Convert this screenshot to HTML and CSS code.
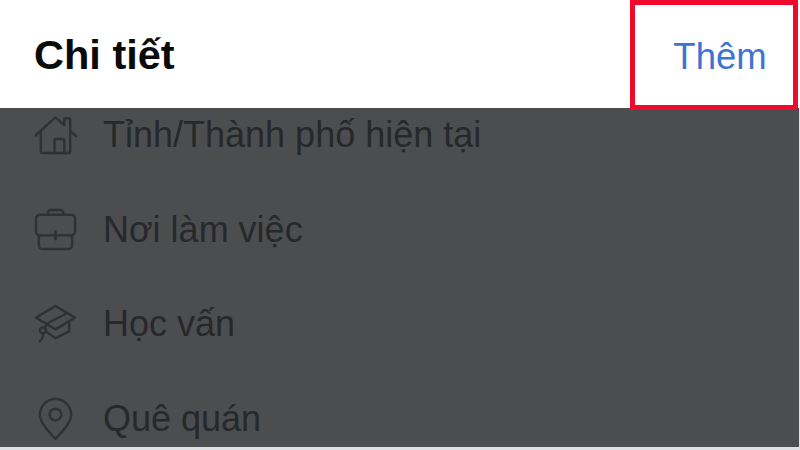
FILE: index.html
```html
<!DOCTYPE html>
<html lang="vi">
<head>
    <meta charset="UTF-8">
    <title>Chi tiết</title>
    <link rel="stylesheet" href="styles.css">
</head>
<body>
    <div class="screen">
        <header class="topbar">
            <h1>Chi tiết</h1>
            <div class="more"><span>Thêm</span></div>
        </header>

        <div class="overlay">
            <ul class="details">
                <li>
                    <svg viewBox="0 0 44 44" class="icon">
                        <path d="M1.500 22 22 3.500l9 8V4.500h6v13l6 5"/>
                        <path d="M7 18v20a2 2 0 0 0 2 2h26a2 2 0 0 0 2-2V18"/>
                        <path d="M21 40V27a1.500 1.500 0 0 1 1.500-1.500h7A1.500 1.500 0 0 1 31 27v13"/>
                    </svg>
                    <span>Tỉnh/Thành phố hiện tại</span>
                </li>
                <li>
                    <svg viewBox="0 0 44 44" class="icon">
                        <path d="M14 7V5a3 3 0 0 1 3-3h10a3 3 0 0 1 3 3v2"/>
                        <rect x="2" y="7" width="40" height="21" rx="4"/>
                        <path d="M5 28v10a4 4 0 0 0 4 4h26a4 4 0 0 0 4-4V28"/>
                        <path d="M22 24v8"/>
                    </svg>
                    <span>Nơi làm việc</span>
                </li>
                <li>
                    <svg viewBox="0 0 44 44" class="icon">
                        <path d="M22 3 42 15 22 27 2 15z"/>
                        <path d="M33 11 13 21"/>
                        <path d="M12 23v6l10 7 14-7V20"/>
                        <circle cx="9" cy="28" r="3"/>
                        <path d="M9 31c1 3-1 6-3 8"/>
                    </svg>
                    <span>Học vấn</span>
                </li>
                <li>
                    <svg viewBox="0 0 44 44" class="icon">
                        <path d="M22 43C14 34 6 26 6 18a16 16 0 0 1 32 0c0 8-8 16-16 25z"/>
                        <circle cx="22" cy="18" r="6"/>
                    </svg>
                    <span>Quê quán</span>
                </li>
            </ul>
        </div>
    </div>
</body>
</html>
```
FILE: styles.css
```css
* { box-sizing: border-box; }
html, body { margin: 0; padding: 0; }
body { width: 800px; height: 450px; overflow: hidden; background: #dfe0e1; font-family: "Liberation Sans", Arial, sans-serif; }
.screen { height: 447px; display: flex; flex-direction: column; }
.topbar { position: relative; z-index: 1; height: 108px; flex: none; display: flex; justify-content: space-between; background: #fff; padding-left: 34px; }
.topbar h1 { margin: 0; font-size: 41.500px; line-height: 110px; color: #0b0b0b; }
.more { width: 168px; height: 110px; margin-right: 2px; border: 5px solid #ef0a2b; background: #fff; display: flex; align-items: center; justify-content: center; padding-left: 12px; padding-top: 3px; }
.more span { font-size: 36.500px; color: #3f73d3; }
.overlay { flex: 1; background: #4c4d4f; overflow: hidden; margin-right: 1px; }
.details { list-style: none; margin: -20px 0 0; padding: 0; }
.details li { height: 94.500px; display: flex; align-items: center; padding-left: 34px; gap: 26px; font-size: 36px; color: #27282a; }
.icon { width: 43px; height: 43px; flex: none; fill: none; stroke: #303133; stroke-width: 2.500; stroke-linecap: round; stroke-linejoin: round; }
```
